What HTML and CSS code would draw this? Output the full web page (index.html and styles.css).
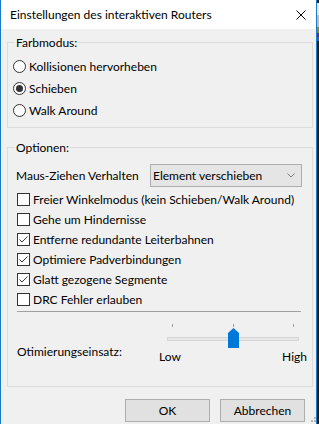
FILE: index.html
```html
<!DOCTYPE html>
<html lang="de">
<head>
<meta charset="utf-8">
<title>Einstellungen des interaktiven Routers</title>
<link rel="stylesheet" href="styles.css">
</head>
<body>
<div class="screen">
  <div class="window">
    <div class="titlebar">
      <span class="title">Einstellungen des interaktiven Routers</span>
      <svg class="close" width="10" height="10" viewBox="0 0 10 10"><path d="M0.5 0.5L9.5 9.5M9.5 0.5L0.5 9.5" stroke="#000" stroke-width="1"/></svg>
    </div>
    <div class="content">
      <fieldset class="group group-mode">
        <legend>Farbmodus:</legend>
        <div class="radio-row">
          <svg class="radio" width="13" height="13" viewBox="0 0 13 13"><circle cx="6.5" cy="6.5" r="6" fill="#fff" stroke="#333"/></svg>
          <span>Kollisionen hervorheben</span>
        </div>
        <div class="radio-row">
          <svg class="radio" width="13" height="13" viewBox="0 0 13 13"><circle cx="6.5" cy="6.5" r="6" fill="#fff" stroke="#333"/><circle cx="6.5" cy="6.5" r="3.5" fill="#333"/></svg>
          <span>Schieben</span>
        </div>
        <div class="radio-row">
          <svg class="radio" width="13" height="13" viewBox="0 0 13 13"><circle cx="6.5" cy="6.5" r="6" fill="#fff" stroke="#333"/></svg>
          <span>Walk Around</span>
        </div>
      </fieldset>

      <fieldset class="group group-options">
        <legend>Optionen:</legend>
        <div class="combo-row">
          <span class="combo-label">Maus-Ziehen Verhalten</span>
          <div class="combo">
            <span>Element verschieben</span>
            <svg class="chevron" width="8" height="5" viewBox="0 0 8 5"><path d="M0.5 0.5L4 4L7.5 0.5" fill="none" stroke="#7a7a7a"/></svg>
          </div>
        </div>
        <div class="check-row">
          <svg class="check" width="13" height="13" viewBox="0 0 13 13"><rect x="0.5" y="0.5" width="12" height="12" fill="#fff" stroke="#333"/></svg>
          <span>Freier Winkelmodus (kein Schieben/Walk Around)</span>
        </div>
        <div class="check-row">
          <svg class="check" width="13" height="13" viewBox="0 0 13 13"><rect x="0.5" y="0.5" width="12" height="12" fill="#fff" stroke="#333"/></svg>
          <span>Gehe um Hindernisse</span>
        </div>
        <div class="check-row">
          <svg class="check" width="13" height="13" viewBox="0 0 13 13"><rect x="0.5" y="0.5" width="12" height="12" fill="#fff" stroke="#333"/><path d="M2.5 6.5L5 9L10.5 3.5" fill="none" stroke="#333"/></svg>
          <span>Entferne redundante Leiterbahnen</span>
        </div>
        <div class="check-row">
          <svg class="check" width="13" height="13" viewBox="0 0 13 13"><rect x="0.5" y="0.5" width="12" height="12" fill="#fff" stroke="#333"/><path d="M2.5 6.5L5 9L10.5 3.5" fill="none" stroke="#333"/></svg>
          <span>Optimiere Padverbindungen</span>
        </div>
        <div class="check-row">
          <svg class="check" width="13" height="13" viewBox="0 0 13 13"><rect x="0.5" y="0.5" width="12" height="12" fill="#fff" stroke="#333"/><path d="M2.5 6.5L5 9L10.5 3.5" fill="none" stroke="#333"/></svg>
          <span>Glatt gezogene Segmente</span>
        </div>
        <div class="check-row">
          <svg class="check" width="13" height="13" viewBox="0 0 13 13"><rect x="0.5" y="0.5" width="12" height="12" fill="#fff" stroke="#333"/></svg>
          <span>DRC Fehler erlauben</span>
        </div>
        <div class="sep"></div>
        <div class="slider-row">
          <span class="slider-label">Otimierungseinsatz:</span>
          <div class="slider">
            <svg class="slider-svg" width="148" height="28" viewBox="0 0 148 28">
              <rect x="13" y="2" width="1" height="3" fill="#a0a0a0"/>
              <rect x="74" y="2" width="1" height="3" fill="#a0a0a0"/>
              <rect x="134" y="2" width="1" height="3" fill="#a0a0a0"/>
              <rect x="8.5" y="15.5" width="131" height="3" fill="#e7e7e7" stroke="#d6d6d6"/>
              <path d="M69 11L74.5 6L80 11V26H69Z" fill="#0078d7"/>
            </svg>
            <div class="slider-labels"><span>Low</span><span>High</span></div>
          </div>
        </div>
      </fieldset>

      <div class="buttons">
        <button class="btn" type="button">OK</button>
        <button class="btn" type="button">Abbrechen</button>
      </div>
    </div>
    <svg class="grip" width="6" height="6" viewBox="0 0 6 6"><rect x="4" y="0" width="2" height="2" fill="#b8b8b8"/><rect x="1" y="3" width="2" height="2" fill="#b8b8b8"/><rect x="4" y="3" width="2" height="2" fill="#b8b8b8"/></svg>
  </div>
  <div class="strip"></div>
</div>
</body>
</html>
```
FILE: styles.css
```css
* { box-sizing: border-box; }
html, body { margin: 0; padding: 0; }
body {
  width: 319px;
  height: 424px;
  overflow: hidden;
  font-family: Lato, "Noto Sans", "Liberation Sans", sans-serif;
  font-size: 12px;
  color: #000;
  background: #2a2a2a;
  white-space: nowrap;
}
.screen { display: flex; width: 319px; height: 424px; }
.window {
  position: relative;
  width: 317px;
  height: 424px;
  border-left: 1px solid #1979ca;
  border-right: 1px solid #1979ca;
  background: #f0f0f0;
  display: flex;
  flex-direction: column;
}
.strip {
  flex: 1;
  background: linear-gradient(#222 0 3px, #e8e8e8 3px 15px, #bdbdbd 15px 27px, #8a8a1e 27px 33px, #6a2a7a 33px 37px, #2d5fb0 37px 41px, #1c1c1c 41px);
}
.titlebar {
  height: 29px;
  flex: none;
  background: #fff;
  display: flex;
  align-items: center;
  justify-content: space-between;
  padding: 0 10px 0 9px;
}
.title { line-height: 16px; }
.close { display: block; }
.content {
  flex: 1;
  padding: 0 3px 0 6px;
  display: flex;
  flex-direction: column;
}
.group {
  margin: 0;
  border: 1px solid #dcdcdc;
  min-width: 0;
}
.group legend {
  padding: 0 1px;
  margin-left: 2px;
  line-height: 17px;
}
.group-mode {
  margin-top: 5px;
  padding: 5px 0 5px 5px;
}
.radio-row {
  display: flex;
  align-items: flex-start;
  height: 22px;
  line-height: 22px;
}
.radio { display: block; margin-top: 4px; margin-right: 3px; flex: none; }
.group-options {
  margin-top: 11px;
  padding: 8px 10px 22px 5px;
}
.combo-row {
  display: flex;
  align-items: center;
  height: 23px;
  padding-left: 3px;
  margin-bottom: 3px;
}
.combo {
  margin-left: auto;
  width: 152px;
  height: 23px;
  border: 1px solid #adadad;
  background: #e5e5e5;
  display: flex;
  align-items: center;
  justify-content: space-between;
  padding: 0 6px 0 2px;
}
.chevron { display: block; }
.check-row {
  display: flex;
  align-items: flex-start;
  height: 20px;
  line-height: 20px;
  padding-left: 4px;
}
.check { display: block; margin-top: 3px; margin-right: 3px; flex: none; }
.sep {
  margin: 1px 0 0 4px;
  width: 284px;
  height: 1px;
  background: #a0a0a0;
}
.slider-row {
  display: flex;
  margin-top: 10px;
  padding-left: 4px;
}
.slider-label {
  line-height: 16px;
  margin-top: 22px;
  margin-right: auto;
}
.slider {
  width: 148px;
  margin-right: -5px;
  display: flex;
  flex-direction: column;
}
.slider-svg { display: block; }
.slider-labels {
  display: flex;
  justify-content: space-between;
  line-height: 14px;
}
.buttons {
  display: flex;
  justify-content: flex-end;
  gap: 10px;
  margin-top: 12px;
  margin-right: 8px;
}
.btn {
  width: 85px;
  height: 23px;
  margin: 0;
  padding: 0;
  border: 1px solid #adadad;
  background: #e1e1e1;
  font-family: inherit;
  font-size: 12px;
  color: #000;
}
.grip { position: absolute; right: 0; bottom: 1px; display: block; }
```
